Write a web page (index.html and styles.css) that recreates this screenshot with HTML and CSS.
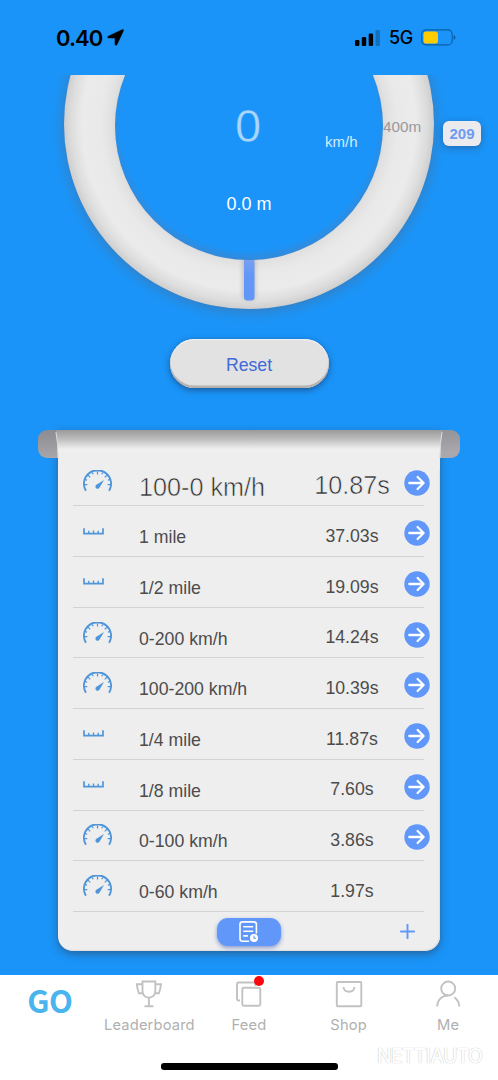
FILE: index.html
```
<!DOCTYPE html>
<html lang="en">
<head>
<meta charset="utf-8">
<title>Performance meter</title>
<link rel="stylesheet" href="styles.css">
</head>
<body>
<svg class="defs" width="0" height="0" aria-hidden="true">
  <symbol id="gauge" viewBox="0 0 28 21">
    <path d="M2.800 20A13.100 13.100 0 1 1 25.200 20" fill="none" stroke="currentColor" stroke-width="1.800"/>
    <path d="M14 1v3.200M4.800 4.800l2.200 2.200M23.200 4.800l-2.200 2.200M1 14h3.200M27 14h-3.200M9 2.200l.8 1.800M19 2.200l-.8 1.800M2 9l2 .8M26 9l-2 .8" stroke="currentColor" stroke-width="1.200"/>
    <path d="M20.300 9.500L16 16.700A2.100 2.100 0 1 1 12.900 14.100Z" fill="currentColor"/>
  </symbol>
  <symbol id="ruler" viewBox="0 0 21 7">
    <path d="M1 .3v5.300h19V.3" fill="none" stroke="currentColor" stroke-width="1.700"/>
    <path d="M5.800 5V2.800M10.500 5V2.500M15.200 5V2.800" stroke="currentColor" stroke-width="1.400"/>
  </symbol>
  <symbol id="arrow" viewBox="0 0 26 26">
    <circle cx="13" cy="13" r="12.700" fill="#6097f8"/>
    <path d="M5.300 13h14M13.600 7l6 6-6 6" fill="none" stroke="#fff" stroke-width="2.300" stroke-linecap="round" stroke-linejoin="round"/>
  </symbol>
</svg>

<header class="status">
  <span class="time">0.40</span>
  <svg class="locate" width="17" height="17" viewBox="0 0 17 17"><path d="M1.300 7.300L15.200.7Q16.900.2 16.300 1.900L9.900 15.700Q8.700 17.100 8 15.300V9.300Q8 8.900 7.500 8.900H1.700Q-.2 8.400 1.300 7.300Z" stroke="#000" stroke-width=".6"/></svg>
  <svg class="signal" width="25" height="16" viewBox="0 0 25 16"><rect y="10" width="4.400" height="6" rx="1.200"/><rect x="6.800" y="7" width="4.400" height="9" rx="1.200"/><rect x="13.700" y="3.500" width="4.400" height="12.500" rx="1.200"/><rect x="20.500" width="4.400" height="16" rx="1.200" opacity=".25"/></svg>
  <span class="network">5G</span>
  <svg class="battery" width="35" height="17" viewBox="0 0 35 17"><rect x=".6" y=".9" width="30.600" height="15" rx="4.500" fill="none" stroke="#0b5da4" stroke-width="1.100"/><rect x="2.500" y="2.500" width="14.500" height="12" rx="2.800" fill="#ffcc02"/><path d="M32.700 5.800q3.600 2.600 0 5.200z" fill="#0b5da4"/></svg>
</header>

<main>
  <section class="dial">
    <svg class="ring" width="498" height="264" viewBox="0 75 498 264">
      <defs>
        <radialGradient id="band" gradientUnits="userSpaceOnUse" cx="249" cy="124" r="185">
          <stop offset=".72" stop-color="#d9d9d9"/><stop offset=".745" stop-color="#e1e1e1"/><stop offset=".8" stop-color="#e9e9e9"/><stop offset=".9" stop-color="#ebebeb"/><stop offset=".96" stop-color="#dddddd"/><stop offset="1" stop-color="#cecece"/>
        </radialGradient>
        <radialGradient id="halo" gradientUnits="userSpaceOnUse" cx="249" cy="126" r="200">
          <stop offset=".91" stop-color="#4f6b8d" stop-opacity=".45"/><stop offset="1" stop-color="#1a94f7" stop-opacity="0"/>
        </radialGradient>
        <radialGradient id="well" gradientUnits="userSpaceOnUse" cx="249" cy="122" r="138">
          <stop offset=".93" stop-color="#1a94f8"/><stop offset="1" stop-color="#3589d8"/>
        </radialGradient>
        <linearGradient id="needle" x2="0" y2="1"><stop stop-color="#85a6e8"/><stop offset=".5" stop-color="#6397f7"/></linearGradient>
        <filter id="soft" x="-2" width="5"><feGaussianBlur stdDeviation="2.500"/></filter>
      </defs>
      <circle cx="249" cy="126" r="200" fill="url(#halo)"/>
      <circle cx="249" cy="124" r="185" fill="url(#band)"/>
      <rect x="243" y="258" width="12" height="41" rx="3" opacity=".2" filter="url(#soft)"/>
      <rect x="244" y="250" width="10.500" height="50.500" rx="3" fill="url(#needle)"/>
      <circle cx="249" cy="126" r="134" fill="url(#well)"/>
    </svg>
    <span class="speed">0</span>
    <span class="unit">km/h</span>
    <span class="distance">0.0 m</span>
    <span class="mark">400m</span>
    <span class="badge">209</span>
  </section>

  <button class="reset">Reset</button>

  <section class="panel">
    <svg class="roll" width="422" height="40" viewBox="0 0 422 40">
      <defs>
        <linearGradient id="endcap" x2=".3" y2="1"><stop stop-color="#8b8b91"/><stop offset="1" stop-color="#aaa8ac"/></linearGradient>
        <linearGradient id="sheet" x2="0" y2="1"><stop stop-color="#9a9a9a"/><stop offset=".2" stop-color="#b8b8b8"/><stop offset=".48" stop-color="#efefef"/><stop offset=".65" stop-color="#eee"/></linearGradient>
      </defs>
      <rect width="422" height="28" rx="9" fill="url(#endcap)"/>
      <path d="M18 0H404Q401.500 20 401.500 40H20.500Q20.500 20 18 0Z" fill="url(#sheet)"/>
      <path d="M18 2Q20 12 20 28M404 2Q402 12 402 28" fill="none" stroke="#dcdcdc"/>
    </svg>
    <ul class="runs">
      <li class="lead"><svg class="gauge"><use href="#gauge"/></svg><span class="name">100-0 km/h</span><span class="result">10.87s</span><svg class="arrow"><use href="#arrow"/></svg></li>
      <li><svg class="ruler"><use href="#ruler"/></svg><span class="name">1 mile</span><span class="result">37.03s</span><svg class="arrow"><use href="#arrow"/></svg></li>
      <li><svg class="ruler"><use href="#ruler"/></svg><span class="name">1/2 mile</span><span class="result">19.09s</span><svg class="arrow"><use href="#arrow"/></svg></li>
      <li><svg class="gauge"><use href="#gauge"/></svg><span class="name">0-200 km/h</span><span class="result">14.24s</span><svg class="arrow"><use href="#arrow"/></svg></li>
      <li><svg class="gauge"><use href="#gauge"/></svg><span class="name">100-200 km/h</span><span class="result">10.39s</span><svg class="arrow"><use href="#arrow"/></svg></li>
      <li><svg class="ruler"><use href="#ruler"/></svg><span class="name">1/4 mile</span><span class="result">11.87s</span><svg class="arrow"><use href="#arrow"/></svg></li>
      <li><svg class="ruler"><use href="#ruler"/></svg><span class="name">1/8 mile</span><span class="result">7.60s</span><svg class="arrow"><use href="#arrow"/></svg></li>
      <li><svg class="gauge"><use href="#gauge"/></svg><span class="name">0-100 km/h</span><span class="result">3.86s</span><svg class="arrow"><use href="#arrow"/></svg></li>
      <li><svg class="gauge"><use href="#gauge"/></svg><span class="name">0-60 km/h</span><span class="result">1.97s</span></li>
    </ul>
    <footer class="tools">
      <button class="history">
        <svg width="20" height="22" viewBox="0 0 20 22" fill="none" stroke="#fff" stroke-width="1.600" stroke-linecap="round"><path d="M9.500 20.200H3.500Q1 20.200 1 17.700V3.300Q1 .9 3.500.9H14.500Q17.400.9 17.400 3.300V12M4.800 5.800h8.800M4.800 10.300h8.800M4.800 14.900h3.500"/><circle cx="15" cy="17" r="4" fill="#fff" stroke="none"/><path d="M15 15v2.200h1.700" stroke="#6097f8" stroke-width="1.100"/></svg>
      </button>
      <svg class="add" width="15" height="15" viewBox="0 0 15 15"><path d="M7.500.8v13.400M.8 7.500h13.400" stroke="#6097f8" stroke-width="1.900" stroke-linecap="round"/></svg>
    </footer>
  </section>
</main>

<nav class="tabs">
  <a class="go">GO</a>
  <a><svg width="28" height="28" viewBox="0 0 28 28"><path d="M7.500 1.500h12.800V11Q20.300 17 13.900 17.700Q7.500 17 7.500 11ZM7.500 4.300H1.800Q2.300 9 4 13.300H8M20.300 4.300H26Q25.500 9 23.800 13.300H20M13.900 18v8M9.500 26.300h9"/></svg><span>Leaderboard</span></a>
  <a><svg width="28" height="28" viewBox="0 0 28 28"><path d="M5 20.500H3.500Q2 20.500 2 19V4Q2 2.500 3.500 2.500H19Q20.500 2.500 20.500 4V6"/><rect x="7.300" y="7.800" width="18" height="18" rx="1.500"/></svg><i class="dot"></i><span>Feed</span></a>
  <a><svg width="28" height="28" viewBox="0 0 28 28"><rect x="1.800" y="2" width="24.500" height="24.300" rx="1"/><path d="M8.500 7Q9 11.700 14 11.700T19.500 7"/></svg><span>Shop</span></a>
  <a><svg width="28" height="28" viewBox="0 0 28 28"><circle cx="14.200" cy="8.500" r="7"/><path d="M3.200 26.500C3.500 19 8.500 15.500 14 15.500M20.300 17.300Q25 20.700 25.400 26.500"/></svg><span>Me</span></a>
  <i class="home"></i>
  <b class="watermark">NETTIAUTO</b>
</nav>
</body>
</html>
```

FILE: styles.css
```
* { box-sizing: border-box; }
body {
  margin: 0;
  width: 498px;
  height: 1080px;
  overflow: hidden;
  display: flex;
  flex-direction: column;
  background: #1a94f8;
  font-family: "Liberation Sans", Arial, sans-serif;
}
.defs { position: absolute; }
button { border: 0; padding: 0; font: inherit; }

.status {
  height: 75px;
  padding: 0 42px 0 56px;
  display: flex;
  align-items: center;
  color: #000;
  font-family: Inter, sans-serif;
}
.time { font-size: 22px; font-weight: 600; line-height: 24px; width: 46px; letter-spacing: -.9px; }
.locate { margin-left: 5px; }
.signal { margin-left: auto; }
.network { margin: 0 8px 0 9px; width: 24px; font-size: 18px; font-weight: 500; letter-spacing: -.4px; }

main { height: 900px; }
.dial { position: relative; height: 264px; }
.ring { display: block; }
.dial span { position: absolute; white-space: nowrap; }
.speed { left: 198px; width: 100px; top: 24px; text-align: center; font-size: 47px; line-height: 54px; color: #a9d7fb; -webkit-text-stroke: .5px #1a94f8; }
.unit { left: 325px; top: 58px; font-size: 15px; line-height: 18px; color: #d6ebfd; }
.distance { left: 199px; width: 100px; top: 118px; text-align: center; font-size: 18px; line-height: 22px; color: #fff; }
.mark { left: 383px; top: 43px; font-size: 15.300px; line-height: 18px; color: #999; }
.badge {
  left: 443px; top: 46px; width: 38px; height: 25px;
  border-radius: 6px;
  background: #ebebed;
  box-shadow: 0 2px 7px rgba(50, 60, 90, .45);
  color: #6e9af2;
  font-size: 15px; font-weight: 700; line-height: 25px; text-align: center;
}

.reset {
  display: block;
  width: 159px;
  height: 49px;
  margin: 0 auto;
  border-radius: 24.500px;
  background: #e2e2e2;
  box-shadow: inset 0 -2.500px 1px #b4b0ae, inset 0 1px 1px #f2f2f2, 0 2px 6px rgba(30, 45, 80, .6);
  color: #4169d8;
  font-size: 17.700px;
  padding-top: 3px;
}

.panel {
  position: relative;
  width: 382px;
  height: 521px;
  margin: 42px 0 0 58px;
  padding: 25.700px 16px 0 15px;
  border-radius: 0 0 15px 15px;
  background: #eee;
  box-shadow: inset -1px -1px 1px #ddd, 0 3px 9px rgba(50, 60, 80, .55);
}
.roll { position: absolute; left: -20px; top: 0; }
.runs { position: relative; margin: 0; padding: 0; list-style: none; }
.runs li {
  height: 50.700px;
  padding-left: 10px;
  display: grid;
  grid-template-columns: 56px 163px 102px 26px;
  align-items: center;
  border-bottom: 1px solid #d3d3d3;
  color: #4c4c4c;
  font-size: 17.700px;
}
.gauge { width: 29px; height: 22px; color: #4f95d9; }
.ruler { width: 21px; height: 7px; color: #4f95d9; }
.name { padding-top: 13px; }
.result { padding: 10.500px 2px 0 0; text-align: center; }
.runs .lead { font-size: 25.200px; color: #2c2c2c; -webkit-text-stroke: .6px #eee; }
.arrow { width: 26px; height: 26px; margin-top: 4px; }
.tools { position: relative; height: 40px; display: flex; align-items: flex-start; }
.history {
  display: flex;
  align-items: center;
  justify-content: center;
  width: 64px;
  height: 28px;
  margin: 6px 0 0 144px;
  border-radius: 11px;
  background: #6097f8;
  box-shadow: 0 2px 4px rgba(70, 100, 190, .6);
}
.add { margin: 12px 0 0 119px; }

.tabs {
  position: relative;
  height: 105px;
  background: #fff;
  display: grid;
  grid-template-columns: repeat(5, 1fr);
  color: #b0b0b0;
  font-family: Inter, sans-serif;
  font-size: 14.700px;
}
.tabs a {
  position: relative;
  display: flex;
  flex-direction: column;
  align-items: center;
  padding-top: 5px;
}
.tabs a svg { fill: none; stroke: #c2c2c2; stroke-width: 1.900; }
.tabs span { margin-top: 7.500px; line-height: 18px; letter-spacing: .15px; }
.tabs .go {
  padding-top: 2px;
  color: #49b4ee;
  font-family: "Noto Sans CJK SC", sans-serif;
  font-weight: 700;
  font-size: 31px;
  line-height: 46px;
  letter-spacing: -.5px;
}
.dot { position: absolute; left: 55px; top: 1px; width: 10px; height: 10px; border-radius: 50%; background: #f9070d; }
.home { position: absolute; left: 161px; top: 88px; width: 177px; height: 6.500px; border-radius: 3px; background: #000; }
.watermark {
  position: absolute; left: 377px; top: 69px;
  font-family: Inter, sans-serif; font-size: 19.500px; font-weight: 500; line-height: 24px; letter-spacing: -.8px;
  color: #fff;
  text-shadow: 0 0 1px #bbb, 0 0 1px #ddd;
}
```
